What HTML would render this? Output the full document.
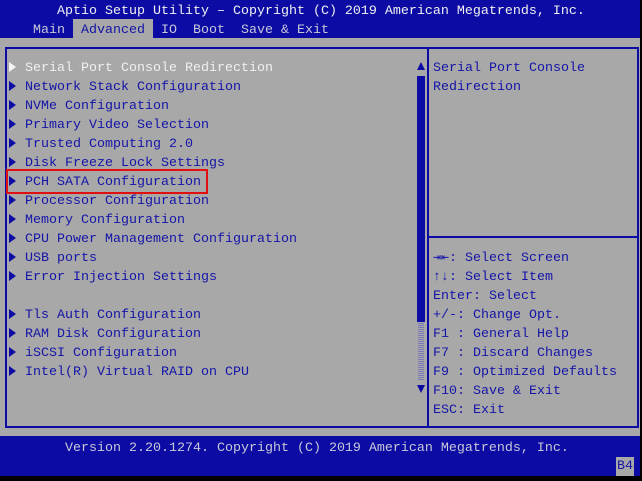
<!DOCTYPE html>
<html><head><meta charset="utf-8"><style>
*{margin:0;padding:0;box-sizing:border-box}
body{width:642px;height:481px;background:#000;position:relative;overflow:hidden;font-family:"Liberation Mono","DejaVu Sans Mono",monospace;font-size:13.33px;}
.a{position:absolute;white-space:pre;line-height:19px;}
.blue{background:#0c0ca4}
.gray{background:#a8a8a8}
.t{color:#1414a8;padding-top:1px}
.w{color:#f0f0f0;padding-top:1px}
.l{color:#c8c8d8;padding-top:2px}
.tri{position:absolute;width:0;height:0;border-top:5px solid transparent;border-bottom:5px solid transparent;border-left:7px solid #0c0ca4;}
</style></head><body>
<div class="a blue" style="left:0;top:0;width:640px;height:38px"></div>
<div class="a w" style="left:57px;top:1px">Aptio Setup Utility – Copyright (C) 2019 American Megatrends, Inc.</div>
<div class="a gray" style="left:73px;top:19px;width:80px;height:19px"></div>
<div class="a l" style="left:33px;top:19px">Main</div>
<div class="a t" style="left:81px;top:20px">Advanced</div>
<div class="a l" style="left:161px;top:19px">IO  Boot  Save &amp; Exit</div>
<div class="a gray" style="left:0;top:38px;width:640px;height:398px"></div>
<div class="a" style="left:5px;top:47px;width:634px;height:381px;border:2px solid #0c0ca4"></div>
<div class="a" style="left:427px;top:47px;width:2px;height:381px;background:#0c0ca4"></div>
<div class="a" style="left:429px;top:236px;width:210px;height:2px;background:#0c0ca4"></div>
<div class="a" style="left:417px;top:62px;width:0;height:0;border-left:4px solid transparent;border-right:4px solid transparent;border-bottom:8px solid #0c0ca4"></div>
<div class="a" style="left:417px;top:76px;width:8px;height:246px;background:#0c0ca4"></div>
<div class="a" style="left:418px;top:322px;width:6px;height:58px;background:repeating-linear-gradient(0deg,#7878b8 0 1px,#a8a8a8 1px 2px)"></div>
<div class="a" style="left:417px;top:385px;width:0;height:0;border-left:4px solid transparent;border-right:4px solid transparent;border-top:8px solid #0c0ca4"></div>
<div class="tri" style="left:9px;top:62px;border-left-color:#f4f4f4"></div>
<div class="a w" style="left:25px;top:58px">Serial Port Console Redirection</div>
<div class="tri" style="left:9px;top:81px"></div><div class="a t" style="left:25px;top:77px">Network Stack Configuration</div>
<div class="tri" style="left:9px;top:100px"></div><div class="a t" style="left:25px;top:96px">NVMe Configuration</div>
<div class="tri" style="left:9px;top:119px"></div><div class="a t" style="left:25px;top:115px">Primary Video Selection</div>
<div class="tri" style="left:9px;top:138px"></div><div class="a t" style="left:25px;top:134px">Trusted Computing 2.0</div>
<div class="tri" style="left:9px;top:157px"></div><div class="a t" style="left:25px;top:153px">Disk Freeze Lock Settings</div>
<div class="tri" style="left:9px;top:176px"></div><div class="a t" style="left:25px;top:172px">PCH SATA Configuration</div>
<div class="tri" style="left:9px;top:195px"></div><div class="a t" style="left:25px;top:191px">Processor Configuration</div>
<div class="tri" style="left:9px;top:214px"></div><div class="a t" style="left:25px;top:210px">Memory Configuration</div>
<div class="tri" style="left:9px;top:233px"></div><div class="a t" style="left:25px;top:229px">CPU Power Management Configuration</div>
<div class="tri" style="left:9px;top:252px"></div><div class="a t" style="left:25px;top:248px">USB ports</div>
<div class="tri" style="left:9px;top:271px"></div><div class="a t" style="left:25px;top:267px">Error Injection Settings</div>
<div class="tri" style="left:9px;top:309px"></div><div class="a t" style="left:25px;top:305px">Tls Auth Configuration</div>
<div class="tri" style="left:9px;top:328px"></div><div class="a t" style="left:25px;top:324px">RAM Disk Configuration</div>
<div class="tri" style="left:9px;top:347px"></div><div class="a t" style="left:25px;top:343px">iSCSI Configuration</div>
<div class="tri" style="left:9px;top:366px"></div><div class="a t" style="left:25px;top:362px">Intel(R) Virtual RAID on CPU</div>
<div class="a" style="left:6px;top:169px;width:202px;height:25px;border:2px solid #e01010"></div>
<div class="a t" style="left:433px;top:58px">Serial Port Console
Redirection</div>
<div class="a t" style="left:433px;top:248px">⇥⇤: Select Screen
↑↓: Select Item
Enter: Select
+/-: Change Opt.
F1 : General Help
F7 : Discard Changes
F9 : Optimized Defaults
F10: Save &amp; Exit
ESC: Exit</div>
<div class="a blue" style="left:0;top:436px;width:640px;height:40px"></div>
<div class="a l" style="left:65px;top:437px">Version 2.20.1274. Copyright (C) 2019 American Megatrends, Inc.</div>
<div class="a gray t" style="left:616px;top:457px;width:18px;height:19px;text-align:center;padding-top:0">B4</div>
</body></html>
